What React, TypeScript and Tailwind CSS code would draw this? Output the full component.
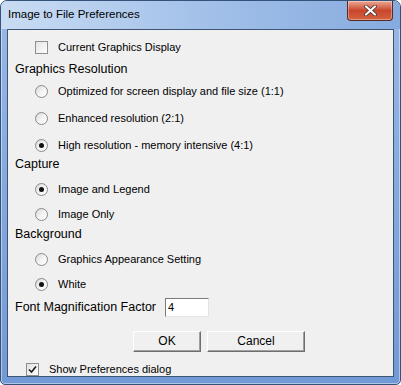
import React from "react";

const ui = { fontFamily: '"Liberation Sans", Arial, sans-serif' };

function Radio({ checked = false }: { checked?: boolean }) {
  return (
    <span className="flex h-[13px] w-[13px] shrink-0 items-center justify-center rounded-full border border-[#8a8a8a] bg-gradient-to-br from-[#d6d6d6] via-[#f4f4f4] to-white">
      {checked && <span className="h-[5px] w-[5px] rounded-full bg-[#111]" />}
    </span>
  );
}

function Check({ checked = false }: { checked?: boolean }) {
  return (
    <span className="flex h-[13px] w-[13px] shrink-0 items-center justify-center border border-[#8e8f8f] bg-gradient-to-br from-[#e2e2e2] to-white">
      {checked && (
        <svg width="9" height="9" viewBox="0 0 9 9">
          <path d="M1 4.5 L3.5 7 L8 1.5" fill="none" stroke="#1c1c1c" strokeWidth="1.6" />
        </svg>
      )}
    </span>
  );
}

function Option({ label, checked, h }: { label: string; checked?: boolean; h: string }) {
  return (
    <div className={`flex items-center pl-[27px] ${h}`}>
      <Radio checked={checked} />
      <span className="ml-[10px] text-[11px] text-black">{label}</span>
    </div>
  );
}

function Heading({ children, h }: { children: React.ReactNode; h: string }) {
  return (
    <div className={`flex items-center pl-[7px] text-[12.5px] text-black ${h}`}>{children}</div>
  );
}

function Button({ children, w }: { children: React.ReactNode; w: string }) {
  return (
    <div
      className={`flex h-[21px] ${w} items-center justify-center border border-t-white border-l-white border-r-[#6e6e6e] border-b-[#6e6e6e] bg-[#f0f0f0] text-[12px] text-black shadow-[inset_-1px_-1px_0_#a0a0a0]`}
    >
      {children}
    </div>
  );
}

export default function App() {
  return (
    <div className="h-[385px] w-[401px] bg-white" style={ui}>
      <div className="relative flex h-[385px] w-[401px] flex-col rounded-t-[7px] rounded-b-[5px] border border-[#34527a] bg-gradient-to-b from-[#98b9e6] to-[#7199d6] shadow-[inset_0_0_0_1px_rgba(255,255,255,0.45)]">
        {/* Title bar */}
        <div className="flex h-[28px] items-center rounded-t-[6px] bg-gradient-to-r from-[#c9dcf3] via-[#a3c1e9] to-[#86abdf] pl-[7px]">
          <span className="text-[11.5px] text-black">Image to File Preferences</span>
        </div>
        <div className="absolute right-[7px] top-0 flex h-[20px] w-[46px] items-center justify-center rounded-b-[4px] border border-t-0 border-[#5a2a22] bg-gradient-to-b from-[#e9a896] via-[#c9452c] to-[#d4623f] shadow-[inset_0_0_0_1px_rgba(255,255,255,0.35)]">
          <svg width="13" height="11" viewBox="0 0 13 11">
            <path d="M2 1.5 L11 9.5 M11 1.5 L2 9.5" stroke="#3b2a2a" strokeWidth="3.6" strokeLinecap="round" />
            <path d="M2 1.5 L11 9.5 M11 1.5 L2 9.5" stroke="#fff" strokeWidth="2.2" strokeLinecap="round" />
          </svg>
        </div>

        {/* Client area */}
        <div className="mx-[6px] flex h-[348px] flex-col border border-[#3e5473] bg-[#f0f0f0] pt-[6px]">
          <div className="flex h-[22px] items-center pl-[27px]">
            <Check />
            <span className="ml-[10px] text-[11px] text-black">Current Graphics Display</span>
          </div>
          <Heading h="h-[22px]">Graphics Resolution</Heading>
          <Option h="h-[22px]" label="Optimized for screen display and file size (1:1)" />
          <Option h="h-[32px]" label="Enhanced resolution (2:1)" />
          <Option h="h-[22px]" label="High resolution - memory intensive (4:1)" checked />
          <Heading h="h-[16px]">Capture</Heading>
          <Option h="h-[34px]" label="Image and Legend" checked />
          <Option h="h-[16px]" label="Image Only" />
          <Heading h="h-[24px]">Background</Heading>
          <Option h="h-[26px]" label="Graphics Appearance Setting" />
          <Option h="h-[24px]" label="White" checked />
          <div className="flex h-[22px] items-center pl-[7px]">
            <span className="text-[12.5px] text-black">Font Magnification Factor</span>
            <div className="ml-auto mr-[184px] flex h-[19px] w-[44px] items-center border border-t-[#7a7a7a] border-l-[#7a7a7a] border-r-[#e3e3e3] border-b-[#e3e3e3] bg-white pl-[2px] text-[11px] text-black">
              4
            </div>
          </div>
          <div className="flex h-[46px] items-center pl-[125px]">
            <Button w="w-[68px]">OK</Button>
            <div className="w-[6px]" />
            <Button w="w-[98px]">Cancel</Button>
          </div>
          <div className="flex h-[10px] items-center pl-[18px]">
            <Check checked />
            <span className="ml-[10px] text-[11px] text-black">Show Preferences dialog</span>
          </div>
        </div>
      </div>
    </div>
  );
}
